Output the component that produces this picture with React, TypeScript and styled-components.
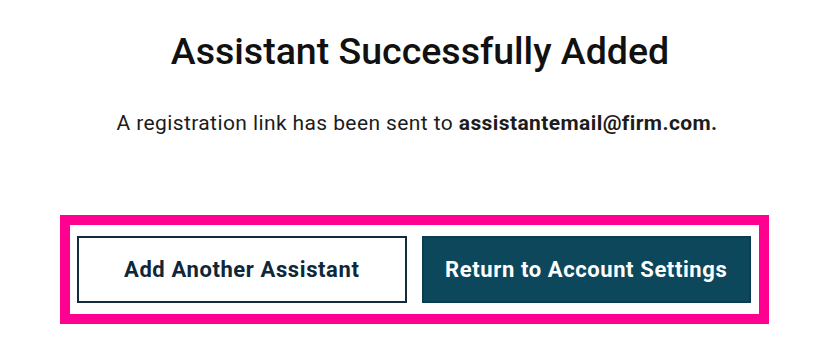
import React from "react";
import styled, { createGlobalStyle } from "styled-components";

const Global = createGlobalStyle`
  html, body { margin: 0; padding: 0; background: #ffffff; }
  body { font-family: Roboto, "Liberation Sans", sans-serif; }
`;

const Page = styled.div`
  width: 840px;
  height: 341px;
  display: flex;
  flex-direction: column;
  box-sizing: border-box;
  padding-top: 28px;
`;

const Title = styled.h1`
  margin: 0;
  text-align: center;
  font-size: 37.5px;
  line-height: 46px;
  font-weight: 500;
  color: #111111;
`;

const Message = styled.p`
  margin: 0;
  margin-top: 36px;
  margin-left: -6px;
  text-align: center;
  font-size: 21px;
  line-height: 26px;
  letter-spacing: 0.4px;
  color: #1c1c1c;
`;

const Strong = styled.strong`
  font-weight: 700;
`;

const Highlight = styled.div`
  margin-top: 79px;
  margin-left: 60px;
  width: 709px;
  height: 109px;
  box-sizing: border-box;
  border: 10px solid #ff0090;
  display: flex;
  gap: 15px;
  padding: 11px 8px 11px 7px;
`;

const Button = styled.button<{ $primary?: boolean }>`
  flex: 1;
  height: 67px;
  box-sizing: border-box;
  border: 2px solid ${(p) => (p.$primary ? "#0a3d50" : "#132c3d")};
  background: ${(p) => (p.$primary ? "#0c475b" : "#ffffff")};
  color: ${(p) => (p.$primary ? "#ffffff" : "#0f2738")};
  font-family: Roboto, "Liberation Sans", sans-serif;
  font-size: 22px;
  letter-spacing: 0.6px;
  font-weight: 700;
  cursor: pointer;
  padding: 0;
`;

export default function App() {
  return (
    <>
      <Global />
      <Page>
        <Title>Assistant Successfully Added</Title>
        <Message>
          A registration link has been sent to <Strong>assistantemail@firm.com.</Strong>
        </Message>
        <Highlight>
          <Button>Add Another Assistant</Button>
          <Button $primary>Return to Account Settings</Button>
        </Highlight>
      </Page>
    </>
  );
}
